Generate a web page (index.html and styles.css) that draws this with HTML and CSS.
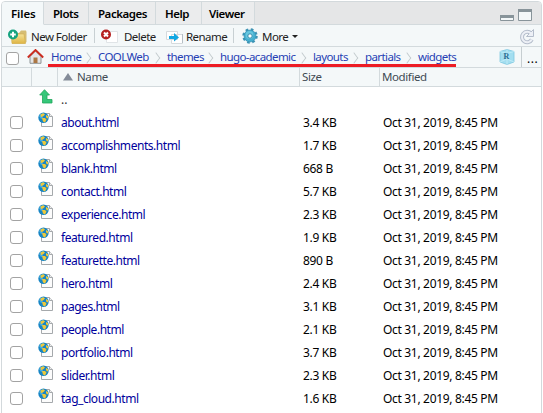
FILE: index.html
```html
<!DOCTYPE html>
<html lang="en">
<head>
<meta charset="utf-8">
<title>Files</title>
<link rel="stylesheet" href="styles.css">
</head>
<body>
<svg width="0" height="0" class="defs">
  <symbol id="doc" viewBox="0 0 16 16">
    <path d="M3.5 1.500h8l3 3v10h-11z" fill="#fcfcfc" stroke="#a5a9ac"/>
    <path d="M11.5 1.500v3h3" fill="#eee" stroke="#a5a9ac"/>
    <circle cx="5.500" cy="5.800" r="5.200" fill="#1685c5"/>
    <path d="M1 4a5 5 0 0 1 4-3l1 2-2 1 1 2-2 1z" fill="#4caeda"/>
    <path d="M2.500 2.500l3-1.300 1.500 1.300-2 2-2 .5zM4 6h3l1.500 1.500-1.500 3-2-1zM8 3l2 1 .3 2-1.300.5-1-1.500z" fill="#edc83c"/>
  </symbol>
</svg>
<div class="pane">
  <nav class="tabs">
    <div class="tab active t1">Files</div><div class="tab t2">Plots</div><div class="tab t3">Packages</div><div class="tab t4">Help</div><div class="tab t5">Viewer</div>
    <div class="windows"><svg width="34" height="14" viewBox="0 0 34 14"><path d="M.5 6.500h13v5H.5z" fill="#f4f8f9" stroke="#88949a"/><path d="M0 6h14v3H0z" fill="#88949a"/><path d="M18.500.500h13v11h-13z" fill="#f4f8f9" stroke="#88949a"/><path d="M18 0h14v3H18z" fill="#88949a"/></svg></div>
  </nav>
  <div class="toolbar">
    <svg class="i-folder" width="20" height="16" viewBox="0 0 20 16"><defs><linearGradient id="fg" x2="0" y2="1"><stop stop-color="#f4e29a"/><stop offset="1" stop-color="#dfb544"/></linearGradient></defs><path d="M4 4h7l2-2.500h5l.5 1.500v10l-2 1.500H4z" fill="#d5bd75"/><path d="M3 5h13l1.500 9.500H4z" fill="url(#fg)" stroke="#d3ad4a" stroke-width=".6"/><circle cx="5" cy="5.500" r="5" fill="#16a37f"/><path d="M5 2.700v5.600M2.200 5.500h5.600" stroke="#fff" stroke-width="2"/></svg>
    <span class="label l-new">New Folder</span><i class="sep"></i>
    <svg class="i-delete" width="18" height="15" viewBox="0 0 18 15"><path d="M5.500 2.500h11v11h-11z" fill="#fff" stroke="#e0e4e7"/><circle cx="5" cy="5.500" r="5" fill="#b52020"/><path d="M3 3.500l4 4m0-4l-4 4" stroke="#fff" stroke-width="2"/></svg>
    <span class="label l-del">Delete</span>
    <svg class="i-rename" width="18" height="14" viewBox="0 0 18 14"><path d="M.5 1.500h11v8H.5zM5.500 4.500h11v9h-11z" fill="#fff" stroke="#d5dadd"/><path d="M3 6h5V3l5 4.500-5 4V9H3z" fill="#12a7e2"/><path d="M16.500 4v9" stroke="#b5bec5"/></svg>
    <span class="label l-ren">Rename</span><i class="sep"></i>
    <svg class="i-gear" width="16" height="16" viewBox="0 0 16 16"><circle cx="8" cy="8" r="6.500" fill="none" stroke="#3f94b5" stroke-width="2.500" stroke-dasharray="2.600 2.505"/><circle cx="8" cy="8" r="6" fill="#45afd0" stroke="#3289ad" stroke-width=".6"/><circle cx="7.500" cy="7" r="3.900" fill="#67c6df"/><circle cx="8" cy="8" r="2.200" fill="#fff" stroke="#318cad"/></svg>
    <span class="label l-more">More</span><i class="caret"></i>
    <svg class="i-refresh" width="16" height="16" viewBox="0 0 16 16"><path d="M12 4.500A5.200 5.200 0 1 0 12.800 10.500" fill="none" stroke="#b4bdcb" stroke-width="4"/><path d="M14.500.500v7h-7z" fill="#edf0f6" stroke="#b4bdcb"/><path d="M12 4.500A5.200 5.200 0 1 0 12.800 10.500" fill="none" stroke="#edf0f6" stroke-width="2"/></svg>
  </div>
  <div class="crumbs">
    <i class="check"></i>
    <svg class="i-home" width="17" height="15" viewBox="0 0 17 15"><path d="M3 7.500L8.500 2 14 7.500v6.800H3z" fill="#e4e5e6" stroke="#858a8d" stroke-width=".9"/><path d="M6.500 8.500h4V14h-4z" fill="#ab7744"/><path d="M.8 8.500L8.500 1l7.700 7.500" fill="none" stroke="#cb2c20" stroke-width="1.900"/></svg>
    <div class="trail">
      <a class="c1">Home</a><a class="c2">COOLWeb</a><a class="c3">themes</a><a class="c4">hugo-academic</a><a class="c5">layouts</a><a class="c6">partials</a><a class="c7">widgets</a>
    </div>
    <svg class="i-cube" width="16" height="16" viewBox="0 0 16 16"><path d="M1 2.500L8 .5l7 2v10.500l-7 2.500-7-2.500z" fill="#a3def0" stroke="#7dc7df" stroke-width=".8"/><path d="M1 2.500l7 2 7-2M8 4.500v11M1 13l7-3 7 3M8 .5v9" fill="none" stroke="#c5edf8" stroke-width=".8"/><text x="4.500" y="10" class="cube-letter">R</text></svg>
    <span class="dots">...</span>
  </div>
  <div class="head"><span></span><span></span><span class="name"><svg width="10" height="8" viewBox="0 0 10 8"><path d="M5 0l5 7.500H0z" fill="#838b98"/></svg><b class="h-name">Name</b></span><span><b>Size</b></span><span><b>Modified</b></span></div>
  <div class="rows" id="rows">
    <div class="row"><span></span><svg class="i-up" width="14" height="15" viewBox="0 0 14 15"><path d="M5.500.7L10.500 6H8v4.500h5V14H3.500V6H.7z" fill="#36c779" stroke="#20a65b" stroke-width=".8"/></svg><span class="file up">..</span></div>
  </div>
</div>
<script src="files.js"></script>
</body>
</html>
```
FILE: styles.css
```css
* { box-sizing: border-box; }
body { margin: 0; width: 543px; height: 413px; overflow: hidden; background: #fff; font: 12px/20px "Noto Sans", "Open Sans", sans-serif; color: #000; }
.defs { position: absolute; }
.pane { margin: 1px 1px 0 1px; width: 541px; height: 430px; border: 1px solid #d3d9dc; border-radius: 4px 4px 0 0; overflow: hidden; background: #fff; }
.tabs { height: 23px; display: flex; background: #e5e6e7; }
.tab { height: 23px; flex: none; border-right: 1px solid #d3dadd; border-bottom: 1px solid #d3dadd; background: #ebeced; padding-left: 9px; font-weight: 600; font-size: 11.5px; letter-spacing: -.45px; line-height: 24px; white-space: nowrap; }
.tab.active { background: #f4f8f9; border-bottom-color: #f4f8f9; letter-spacing: -.1px; }
.t1 { width: 42px; } .t2 { width: 45px; } .t3 { width: 67px; } .t4 { width: 46px; } .t5 { width: 53px; padding-left: 7px; }
.windows { flex: 1; padding: 7px 7px 0 0; border-bottom: 1px solid #d3dadd; display: flex; justify-content: flex-end; }
.toolbar { height: 22px; display: flex; align-items: flex-start; background: #f4f8f9; border-bottom: 1px solid #d3dadd; }
.toolbar svg { flex: none; }
.label { flex: none; line-height: 24px; white-space: nowrap; color: #222; font-size: 11.5px; letter-spacing: -.55px; }
.i-folder { margin: 4px 3px 0 6px; }
.l-new { width: 63px; }
.sep { flex: none; width: 1px; height: 15px; margin-top: 3px; background: #c8d0d3; }
.i-delete { margin: 4px 5px 0 6px; }
.l-del { width: 41px; }
.i-rename { margin: 5px 2px 0 1px; }
.l-ren { width: 47px; }
.i-gear { margin: 3px 4px 0 8px; }
.l-more { width: 30px; }
.caret { margin-top: 10px; border: 3px solid transparent; border-top: 3px solid #222; border-bottom: 0; }
.i-refresh { margin: 4px 6px 0 auto; }
.crumbs { height: 21px; display: flex; background: #f4f8f9; border-bottom: 1px solid #d3dadd; }
.check { flex: none; display: block; width: 13px; height: 13px; border: 1px solid #a3a3a3; border-radius: 3px; background: #fff; }
.crumbs .check { margin: 5px 8px 0 4px; }
.i-home { margin: 2px 4px 0 0; flex: none; }
.trail { flex: none; width: 408px; height: 20px; display: flex; border-bottom: 3px solid #ed1c24; color: #263fb4; line-height: 20px; padding-left: 3px; font-size: 11.5px; letter-spacing: -.6px; }
.trail a { position: relative; flex: none; white-space: nowrap; }
.trail a:not(:last-child)::after { content: ""; position: absolute; right: 7px; top: 7px; width: 7px; height: 7px; border: solid #c1c9cc; border-width: 1px 1px 0 0; transform: scaleX(.75) rotate(45deg); }
.c1 { width: 47px; } .c2 { width: 69px; } .c3 { width: 53px; } .c4 { width: 93px; } .c5 { width: 52px; } .c6 { width: 53px; }
.i-cube { margin: 2px 6px 0 43px; flex: none; }
.cube-letter { font: bold 8px "Liberation Serif", serif; fill: #286c91; letter-spacing: 0; }
.dots { border-left: 1px solid #c6ced1; padding-left: 5px; line-height: 24px; width: 22px; letter-spacing: .5px; }
.head { height: 19px; display: grid; grid-template-columns: 30px 26px 242px 80px 1fr; background: #f4f8f9; border-bottom: 1px solid #d3dadd; line-height: 18px; color: #414b54; font-size: 11.5px; letter-spacing: -.4px; }
.head span { border-right: 1px solid #d3dadd; padding-left: 2px; }
.head span:last-child { border: 0; }
.head b { font-weight: 400; display: inline-block; }
.head .name { display: flex; padding-left: 5px; }
.head .name svg { margin: 5px 4px 0 0; }
.rows { padding-top: 1px; }
.row { height: 23px; display: grid; grid-template-columns: 36px 23px 242px 80px 1fr; line-height: 23px; white-space: nowrap; letter-spacing: -.32px; }
.row .check { margin: 5px 0 0 8px; }
.row .doc { width: 16px; height: 16px; margin: 1px 0 0 0; }
.i-up { margin: 1px 0 0 1px; }
.file { color: #00009c; letter-spacing: -.46px; }
.up { color: #333; letter-spacing: 0; }
```
FILE: files.js
```js
const files = [
  ["about.html", "3.4 KB"], ["accomplishments.html", "1.7 KB"], ["blank.html", "668 B"],
  ["contact.html", "5.7 KB"], ["experience.html", "2.3 KB"], ["featured.html", "1.9 KB"],
  ["featurette.html", "890 B"], ["hero.html", "2.4 KB"], ["pages.html", "3.1 KB"],
  ["people.html", "2.1 KB"], ["portfolio.html", "3.7 KB"], ["slider.html", "2.3 KB"],
  ["tag_cloud.html", "1.6 KB"]
];
document.getElementById("rows").insertAdjacentHTML("beforeend", files.map(([name, size]) =>
  `<div class="row"><i class="check"></i><svg class="doc"><use href="#doc"/></svg><span class="file">${name}</span><span class="size">${size}</span><span class="date">Oct 31, 2019, 8:45 PM</span></div>`
).join(""));
```
